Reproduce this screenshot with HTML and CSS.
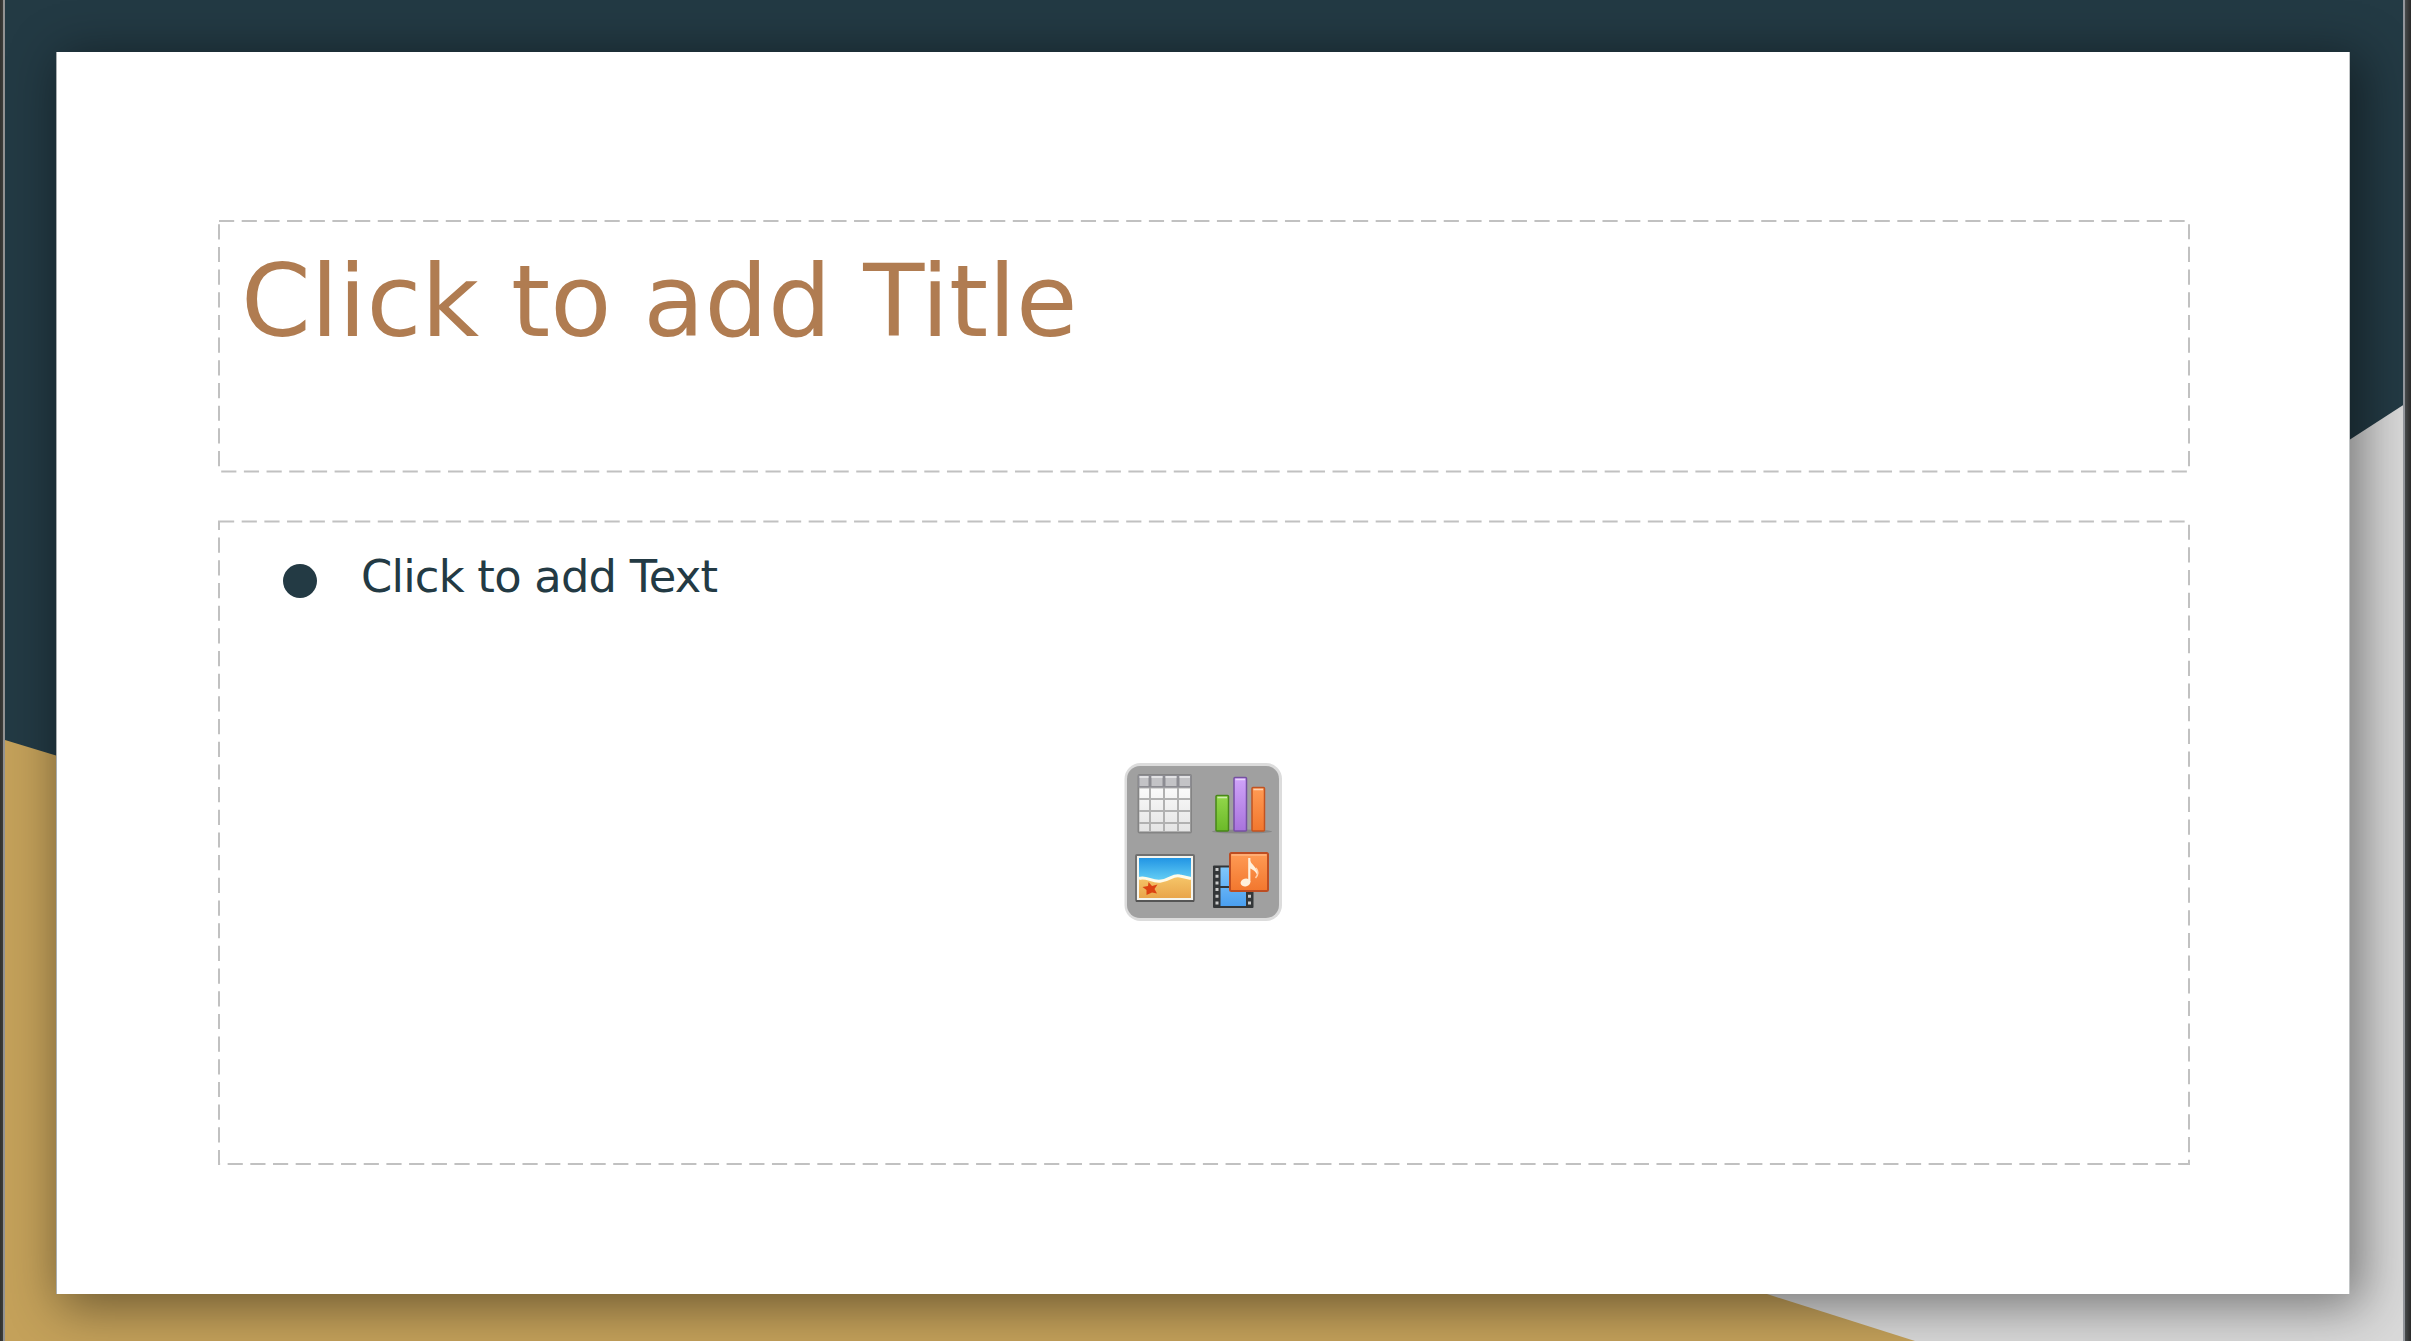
FILE: index.html
```html
<!DOCTYPE html>
<html lang="en">
<head>
<meta charset="utf-8">
<title>Slide</title>
<link rel="stylesheet" href="styles.css">
</head>
<body>
<main class="workspace">
  <svg class="backdrop" viewBox="0 0 2411 1341" aria-hidden="true">
    <rect width="2411" height="1341" fill="#d9d9d9"/>
    <path d="M0 0H2411V400L2350 439.500L1700 860L1000 1060H0Z" fill="#233a44"/>
    <path d="M0 738.500L5 740L56 755.500L1767 1294L1915 1341H0Z" fill="#c4a15a"/>
  </svg>
  <section class="slide">
    <div class="placeholder title-box">
      <svg class="outline" viewBox="0 0 1971 251"><path d="M0 0H1970V250.500H0Z"/></svg>
      <h1 class="title">Click to add Title</h1>
    </div>
    <div class="placeholder body-box">
      <svg class="outline" viewBox="0 0 1971 643"><path d="M0 .5H1970V643H0Z"/></svg>
      <div class="bullet-row"><span class="bullet"></span><p class="text">Click to add Text</p></div>
      <svg class="insert" viewBox="0 0 158 158">
        <defs>
          <linearGradient id="cell" x2="0" y2="1"><stop offset="0" stop-color="#fafafa"/><stop offset="1" stop-color="#e4e4e4"/></linearGradient>
          <linearGradient id="green" x2="0" y2="1"><stop offset="0" stop-color="#93d74b"/><stop offset="1" stop-color="#6bb929"/></linearGradient>
          <linearGradient id="purple" x2="0" y2="1"><stop offset="0" stop-color="#d0a4fa"/><stop offset="1" stop-color="#a873dc"/></linearGradient>
          <linearGradient id="orange" x2="0" y2="1"><stop offset="0" stop-color="#ff9b55"/><stop offset="1" stop-color="#f2772e"/></linearGradient>
          <linearGradient id="sky" x2="0" y2="1"><stop offset="0" stop-color="#2295e4"/><stop offset="1" stop-color="#69d3f6"/></linearGradient>
          <linearGradient id="sand" x2="0" y2="1"><stop offset="0" stop-color="#f6c76a"/><stop offset="1" stop-color="#e9a54b"/></linearGradient>
          <linearGradient id="film" x2="0" y2="1"><stop offset="0" stop-color="#80c7fa"/><stop offset="1" stop-color="#4a9ff0"/></linearGradient>
        </defs>
        <rect x=".5" y="0" width="157.500" height="158" rx="16" fill="#dcdcdc"/>
        <rect x="3" y="3" width="152" height="152" rx="13" fill="#a0a0a0"/>
        <g>
          <rect x="13.500" y="11" width="54.500" height="59.500" rx="2" fill="#848484"/>
          <rect x="15" y="12" width="51.500" height="57" fill="#b1b1b1"/>
          <rect x="14" y="12" width="53.500" height="12.500" fill="#8c8c92"/>
          <path d="M15.500 13h9v10h-9zM27.500 13h11v10h-11zM41.500 13h11v10h-11zM55.500 13h10.500v10h-10.500z" fill="#c3c3c6"/>
          <path d="M15.500 13h9v2h-9zM27.500 13h11v2h-11zM41.500 13h11v2h-11zM55.500 13h10.500v2h-10.500z" fill="#e2e2e4"/>
          <path d="M15.500 25.500h9.500v9.500h-9.500zM27 25.500h12v9.500h-12zM41 25.500h12v9.500h-12zM55 25.500h11v9.500h-11zM15.500 37h9.500v10h-9.500zM27 37h12v10h-12zM41 37h12v10h-12zM55 37h11v10h-11zM15.500 49h9.500v10h-9.500zM27 49h12v10h-12zM41 49h12v10h-12zM55 49h11v10h-11zM15.500 61h9.500v7h-9.500zM27 61h12v7h-12zM41 61h12v7h-12zM55 61h11v7h-11z" fill="url(#cell)"/>
        </g>
        <g>
          <ellipse cx="118" cy="68.500" rx="30" ry="2" fill="#7c7c7c" opacity=".7"/>
          <rect x="92" y="32.500" width="12.500" height="35.500" rx="1" fill="url(#green)" stroke="#478719" stroke-width="1.500"/>
          <rect x="110" y="14.500" width="12.500" height="53.500" rx="1" fill="url(#purple)" stroke="#7650a2" stroke-width="1.500"/>
          <rect x="128" y="24.500" width="12.500" height="43.500" rx="1" fill="url(#orange)" stroke="#c25320" stroke-width="1.500"/>
          <path d="M93.500 34.500h9.500M111.500 16.500h9.500M129.500 26.500h9.500" stroke="#fff" stroke-opacity=".55" stroke-width="1.500"/>
        </g>
        <g>
          <rect x="11" y="91" width="60" height="48" rx="2" fill="#707070"/>
          <path d="M12 138h58" stroke="#555" stroke-width="2"/>
          <rect x="13" y="93" width="56" height="44" fill="#f5f5ef"/>
          <rect x="15" y="95" width="52" height="24" fill="url(#sky)"/>
          <path d="M15 115C22 112 28 119 37 118C46 117 49 111 56 113L67 115V135H15Z" fill="url(#sand)"/>
          <path d="M15 115.500C22 112.500 28 119.500 37 118C46 117 49 111 56 113L67 115.500" fill="none" stroke="#fffbe8" stroke-width="3"/>
          <path d="M24.500 119L28 123L33.500 121.500L30.500 126L33 130.500L28 129.500L22.500 132L22.500 127L18.500 124L24 123Z" fill="#dc4212"/>
        </g>
        <g>
          <rect x="89" y="102.500" width="40.500" height="42.500" rx="1" fill="#333638"/>
          <path d="M96.500 104.500h25.500v18.500h-25.500zM96.500 125h25.500v18h-25.500z" fill="url(#film)"/>
          <path d="M93 105v39M125.500 105v39" stroke="#c8c8c8" stroke-width="3" stroke-dasharray="3 3.700"/>
          <rect x="106" y="90" width="38" height="38" rx="1.500" fill="url(#orange)" stroke="#bd4d22" stroke-width="2"/>
          <path d="M107.500 92h35" stroke="#ffb47f" stroke-width="1.500"/>
          <ellipse cx="121.500" cy="119.500" rx="5" ry="3.800" transform="rotate(-15 121.500 119.500)" fill="#fff0dc"/>
          <path d="M125.300 95V119" stroke="#fff0dc" stroke-width="2.200"/>
          <path d="M125 95C127 103 135 104 133.500 113C132 108 128 106 125 105Z" fill="#fff0dc"/>
          <path d="M132 105Q136 110 131.500 115" stroke="#ffd1ac" stroke-width="1.500" fill="none"/>
        </g>
      </svg>
    </div>
  </section>
  <div class="edge edge-left"></div>
  <div class="edge edge-right"></div>
</main>
</body>
</html>
```
FILE: styles.css
```css
* { box-sizing: border-box; }
body { margin: 0; font-family: "DejaVu Sans", sans-serif; }
.workspace { position: relative; width: 2411px; height: 1341px; padding: 52px 0 0 56px; overflow: hidden; }
.backdrop { position: absolute; inset: 0; width: 100%; height: 100%; }
.slide { position: relative; width: 2294px; height: 1242px; padding: 169px 159px 0 162px; background: #fff; border-left: 1px solid #a9aeb0; border-right: 1px solid #c2c5c6; display: flex; flex-direction: column; gap: 49px; box-shadow: 8px 8px 48px 4px rgba(0, 0, 0, .46); }
.placeholder { position: relative; }
.title-box { height: 251px; padding: 22px; }
.body-box { height: 643px; padding: 26px 64px; }
.outline { position: absolute; top: 0; left: 0; width: 1971px; height: 100%; overflow: visible; }
.outline path { fill: none; stroke: #c1c1c1; stroke-width: 2; stroke-dasharray: 15.18 7.5; }
.title { position: relative; margin: 0; font-size: 100px; font-weight: 400; line-height: 117px; color: #b07c51; white-space: nowrap; }
.bullet-row { display: flex; align-items: center; gap: 44px; height: 60px; }
.bullet { width: 34px; height: 34px; margin-top: 7px; border-radius: 50%; background: #233a44; }
.text { margin: 0; font-size: 44.800px; line-height: 60px; letter-spacing: -.77px; color: #233a44; white-space: nowrap; }
.insert { position: absolute; left: 905px; top: 242px; width: 158px; height: 158px; }
.edge { position: absolute; top: 0; bottom: 0; width: 5px; }
.edge-left { left: 0; background: linear-gradient(90deg, #31312f 0, #3d3d39 3px, #929292 3px); }
.edge-right { right: 0; width: 8px; background: linear-gradient(90deg, #92959b 0 2px, #484b4c 2px, #292929); }
```
